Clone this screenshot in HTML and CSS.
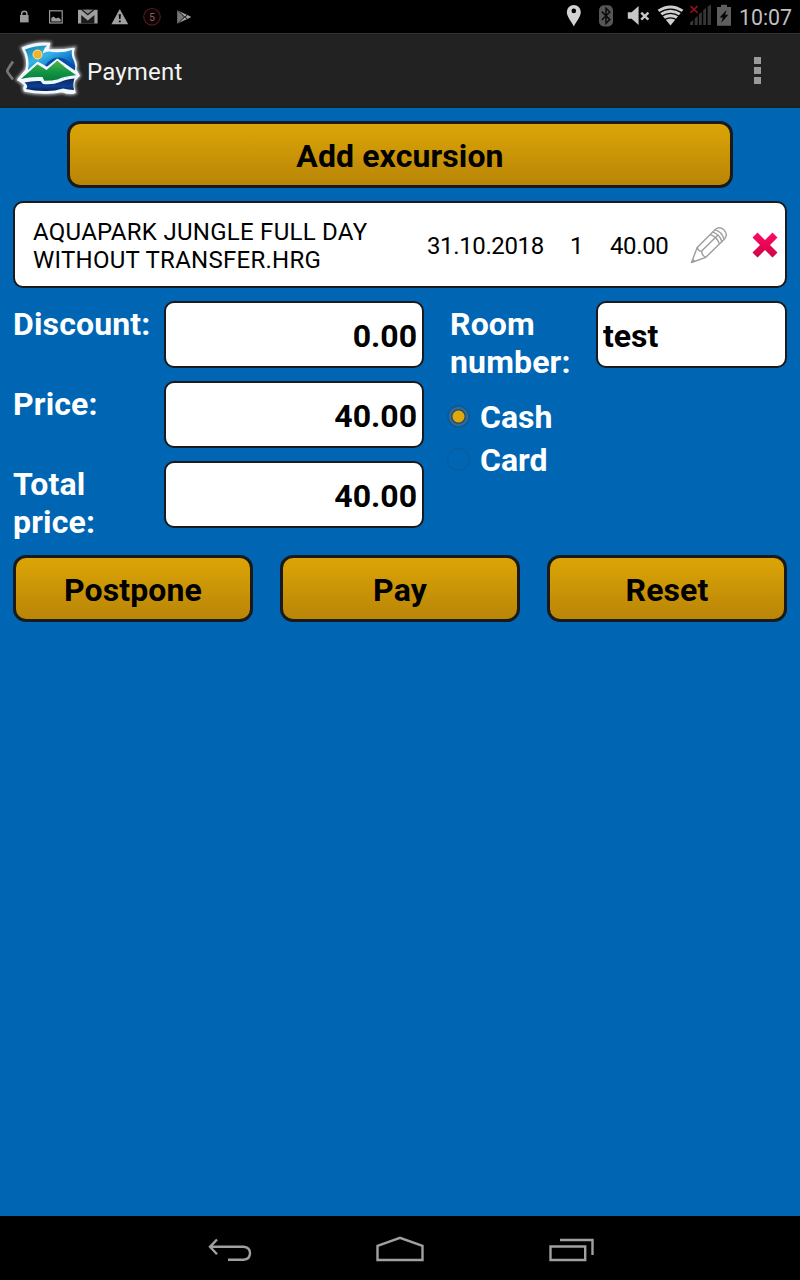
FILE: index.html
```html
<!DOCTYPE html>
<html lang="en">

<head>
    <meta charset="UTF-8">
    <meta name="viewport" content="width=device-width, initial-scale=1.0">
    <title>Payment</title>
    <link rel="stylesheet" href="styles.css">
</head>

<body>
    <div class="status-bar">
        <div class="status-group">
            <svg class="status-icon" viewBox="0 0 32 33">
                <rect x="12" y="15" width="8.6" height="7.4" fill="#9a9a9a" />
                <path d="M13.7 15.5v-1.7a2.6 2.6 0 0 1 5.2 0v1.7" fill="none" stroke="#9a9a9a" stroke-width="1.4" />
            </svg>
            <svg class="status-icon" viewBox="0 0 32 33">
                <rect x="9.6" y="10.8" width="12.6" height="12.2" fill="none" stroke="#9a9a9a" stroke-width="1.2" />
                <path d="M11.3 21.5v-3.6l2.2-1.4 2.5 2 2.3-1 2.4 1.700v2.300z" fill="#9a9a9a" />
            </svg>
            <svg class="status-icon" viewBox="0 0 32 33">
                <rect x="6" y="9.800" width="19.600" height="13.700" fill="#a0a0a0" />
                <path d="M9.200 23.500v-8.500l6.600 5.600 6.600-5.600v8.500z" fill="#1c1c1c" />
                <path d="M8.800 9.800l7 5.600 7-5.600z" fill="#1c1c1c" />
                <path d="M10.800 9.800l5 4 5-4z" fill="#8a8a8a" />
            </svg>
            <svg class="status-icon" viewBox="0 0 32 33">
                <path d="M15.8 9l8.4 15.2H7.4z" fill="#a0a0a0" />
                <path d="M14.7 14.2h2.2l-.4 4.8h-1.4zM14.9 20.4h1.8v1.8h-1.8z" fill="#000" />
            </svg>
            <svg class="status-icon" viewBox="0 0 32 33">
                <circle cx="16" cy="16.8" r="8.3" fill="#0c0404" stroke="#5a1a1c" stroke-width="1.1" />
                <text class="badge-count" x="16" y="20.6">5</text>
            </svg>
            <svg class="status-icon" viewBox="0 0 32 33">
                <path d="M9.2 10.2v13.6l7-6.8z" fill="#777" />
                <path d="M9.2 10.2l10 4.9-2.4 2zM9.2 23.8l10-4.9-2.4-2zM19.6 14.9l3.6 2.1-3.6 2.1-2-2.1z" fill="#a5a5a5" />
                <path d="M10 10.6l9.6 9M10 23.4l9.6-9" stroke="#111" stroke-width=".7" />
            </svg>
        </div>
        <div class="status-group">
            <svg class="status-icon" viewBox="0 0 32 33">
                <path fill-rule="evenodd" d="M15.8 26.4C13.8 22 8.8 17 8.8 12a7 7 0 0 1 14 0c0 5-5 10-7 14.4zM15.8 8.6a2.3 2.3 0 1 0 0 4.6 2.3 2.3 0 0 0 0-4.6z" fill="#d2d2d2" />
            </svg>
            <svg class="status-icon" viewBox="0 0 32 33">
                <rect x="9" y="5.2" width="14" height="21.2" rx="5" fill="#565656" />
                <path d="M11.8 11.6l8 8-3.8 3.8V8.2l3.8 3.8-8 8" fill="none" stroke="#0b0b0b" stroke-width="1.5" />
            </svg>
            <svg class="status-icon" viewBox="0 0 32 33">
                <path d="M5.800 12.300h3.800l7-6.300v19l-7-6.200H5.800z" fill="#c6c6c6" />
                <path d="M19.200 12.700l7.200 7M26.400 12.700l-7.200 7" stroke="#c6c6c6" stroke-width="2.400" />
            </svg>
            <svg class="status-icon" viewBox="0 0 32 33">
                <path d="M3.600 9.700q12.900-8.600 25.800 0L16.500 25.600z" fill="#cfcfcf" />
                <path d="M5 12.900q11.500-7.600 23 0M7.600 16.300q8.900-5.800 17.800 0M10.400 19.800q6.100-3.800 12.200 0" fill="none" stroke="#000" stroke-width="1.300" />
            </svg>
            <svg class="status-icon" viewBox="0 0 32 33">
                <path d="M4 25v-2.600l3.200-2.400v5zM8.700 25v-6.500l3-2.500v9zM13 25V14.200l2.800-2.400V25zM17.200 25V10.200L20 7.800V25zM21.600 25V6.800L25 4.500V25z" fill="#363636" />
                <path d="M4.500 6.200l7 6.400M11.500 6.200l-7 6.400" stroke="#8e0f1c" stroke-width="1.700" />
            </svg>
            <svg class="status-icon status-icon--battery" viewBox="0 0 20 33">
                <path d="M3 7h4V4.800h6V7h4v18.800H3z" fill="#5e5e5e" />
                <path d="M12.600 10l-7 7.400h3.200L7.200 22.800l7.200-8h-3.300z" fill="#050505" />
            </svg>
            <span class="clock">10:07</span>
        </div>
    </div>

    <header class="action-bar">
        <svg class="app-logo" viewBox="0 0 84 74">
            <defs>
                <linearGradient id="sky" x1="0" y1="0" x2="1" y2="1">
                    <stop offset="0" stop-color="#1b7fa8" />
                    <stop offset=".4" stop-color="#35b5e6" />
                    <stop offset=".75" stop-color="#0b6cc4" />
                    <stop offset="1" stop-color="#0a3a94" />
                </linearGradient>
                <linearGradient id="hill" x1="0" y1="0" x2="0" y2="1">
                    <stop offset="0" stop-color="#57b947" />
                    <stop offset=".55" stop-color="#129545" />
                    <stop offset="1" stop-color="#087a35" />
                </linearGradient>
                <linearGradient id="sea" x1="0" y1="0" x2="0" y2="1">
                    <stop offset="0" stop-color="#0c2560" />
                    <stop offset=".6" stop-color="#0d3f91" />
                    <stop offset="1" stop-color="#0a1f55" />
                </linearGradient>
                <filter id="glow" x="-20%" y="-20%" width="140%" height="140%">
                    <feGaussianBlur stdDeviation="1.500" />
                </filter>
                <path id="edge" d="M22.500 15q12-5.500 27-4.500l-1.500 6.500q14 .5 26-1.500-2 6 1 12 2 4 .5 9l3.500 6-4.500 5q-2 5 .5 12-5 2-13-1-6 1-14 1.500-12 .5-23-2-2-2 0-6l-7-5.500 8-9.500q3-10-3.500-22z" />
            </defs>
            <path d="M13 28.500q-5.800 8.500-5.800 9.500t5.800 8.500" fill="none" stroke="#757575" stroke-width="2.800" />
            <use href="#edge" fill="#fff" stroke="#fff" stroke-width="4" filter="url(#glow)" opacity=".65" />
            <use href="#edge" fill="#eff7ff" stroke="#eff7ff" stroke-width="1.500" stroke-linejoin="round" />
            <path d="M25 16.500q10-4 22-4-4 4-4 8 4-3 10-1.500 10 1 19-2-1 6 2 11 2 5 1 9L57.500 25.500l-10.500 8-9.500-5L28 37q2-12-3-20.500z" fill="url(#sky)" />
            <path d="M57 25l-10 8.500-2-1q6-8 13-8 8 0 16 9l1 4z" fill="#0b4aa6" />
            <circle cx="37.500" cy="21.500" r="4.500" fill="#f6b12b" stroke="#ffe59a" stroke-width="1" />
            <path d="M19 46.800Q29 38 37.300 30.500l9.200 5.800 10.800-9.500Q66 35 78 42.700q-14 1-20.500 4.500-6 1.500-13.500 1.300l-2-3.800q-10-.5-23 2.100z" fill="url(#hill)" stroke="#eff7ff" stroke-width="1.300" />
            <path d="M24.500 49.500q8-2 16-1.500l2.500 3q10 1 17-2 6-3 14.500-3.500-2 5-.5 11.500-6-.5-11-1.500-8 2.500-16 2.500-11 .5-21-2 3-3-1.500-6.500z" fill="url(#sea)" />
        </svg>
        <span class="title">Payment</span>
        <div class="overflow">
            <span class="overflow-dot"></span>
            <span class="overflow-dot"></span>
            <span class="overflow-dot"></span>
        </div>
    </header>

    <main class="content">
        <button type="button" class="btn btn-add">Add excursion</button>

        <div class="excursion">
            <span class="excursion-name">AQUAPARK JUNGLE FULL DAY WITHOUT TRANSFER.HRG</span>
            <span class="excursion-date">31.10.2018</span>
            <span class="excursion-count">1</span>
            <span class="excursion-price">40.00</span>
            <svg class="icon-edit" viewBox="0 0 38 38">
                <path d="M1.500 36.500l5.700-15L25.500 3.300q4.500-3.500 8.700.8 4 4.500.3 9L15.800 31.300z" />
                <path d="M7.200 21.500q1.400 4.300 4.400 3.500.3 5 4.200 6.300M11.600 25L27.500 9.500M20.300 8.600q6.500 2.200 9 9M22.800 6.200q6.500 2 9 9M25.300 3.800q6.500 2 8.700 9M2.700 33.500l1.900 1.700" />
            </svg>
            <svg class="icon-delete" viewBox="0 0 26 26">
                <defs>
                    <linearGradient id="cross" x1="0" y1="0" x2="0" y2="1">
                        <stop offset="0" stop-color="#ff0a66" />
                        <stop offset="1" stop-color="#cf0345" />
                    </linearGradient>
                </defs>
                <path d="M5.500.500l7.500 7.500 7.500-7.500 5 5-7.500 7.500 7.500 7.500-5 5-7.500-7.500-7.500 7.500-5-5 7.500-7.500-7.500-7.500z" fill="url(#cross)" />
            </svg>
        </div>

        <form class="payment-form">
            <div class="amounts">
                <label class="label" for="discount">Discount:</label>
                <input type="text" id="discount" class="input-field amount" value="0.00">
                <label class="label" for="price">Price:</label>
                <input type="text" id="price" class="input-field amount" value="40.00">
                <label class="label" for="total">Total price:</label>
                <input type="text" id="total" class="input-field amount" value="40.00">
            </div>
            <div class="details">
                <div class="room">
                    <label class="label" for="room">Room number:</label>
                    <input type="text" id="room" class="input-field" value="test">
                </div>
                <label class="radio">
                    <input type="radio" name="method" class="radio-input" checked>
                    Cash
                </label>
                <label class="radio">
                    <input type="radio" name="method" class="radio-input">
                    Card
                </label>
            </div>
        </form>

        <div class="actions">
            <button type="button" class="btn">Postpone</button>
            <button type="button" class="btn">Pay</button>
            <button type="button" class="btn">Reset</button>
        </div>
    </main>

    <nav class="nav-bar">
        <svg class="nav-icon" viewBox="0 0 48 32">
            <path d="M12 7.500L5 14.800l7 7.500M5.500 14.800h33q6.500.4 6.500 6.500t-6.500 6.500H23" />
        </svg>
        <svg class="nav-icon" viewBox="0 0 48 32">
            <path d="M1.500 13.800L24 5.800l22.500 8v14.200h-45z" />
        </svg>
        <svg class="nav-icon" viewBox="0 0 48 32">
            <path d="M3.500 14.500h34.700v13.500H3.500zM13 8h32.500v15" />
        </svg>
    </nav>
</body>

</html>
```
FILE: styles.css
```css
* {
    box-sizing: border-box;
}

body {
    font-family: Roboto, sans-serif;
    background-color: #0066b3;
    display: flex;
    flex-direction: column;
    height: 100vh;
    margin: 0;
}

.status-bar {
    display: flex;
    justify-content: space-between;
    height: 33px;
    padding: 0 8px;
    background-color: black;
}

.status-group {
    display: flex;
    align-items: center;
}

.status-icon {
    width: 32px;
    height: 33px;
}

.status-icon--battery {
    width: 20px;
    margin-left: -4px;
}

.badge-count {
    font-size: 10.5px;
    text-anchor: middle;
    fill: #8e5c5c;
}

.clock {
    width: 53px;
    margin-left: 5px;
    padding-top: 2px;
    font-size: 21.3px;
    white-space: nowrap;
    color: #c0c0c0;
}

.action-bar {
    display: flex;
    align-items: center;
    height: 75px;
    padding-right: 39px;
    background-color: #222;
    border-top: 1px solid #333;
    border-bottom: 2px solid #1b2025;
}

.app-logo {
    width: 84px;
    height: 74px;
}

.title {
    flex: 1;
    margin-left: 3px;
    padding-top: 3px;
    font-size: 24px;
    letter-spacing: 0.2px;
    color: #f3f3f3;
}

.overflow {
    display: flex;
    flex-direction: column;
    gap: 3px;
}

.overflow-dot {
    width: 7px;
    height: 7px;
    background-color: #9a9a9a;
}

.content {
    flex: 1;
    display: flex;
    flex-direction: column;
    padding: 13px 13px 0;
}

.btn {
    height: 67px;
    padding: 2px 0 0;
    background: linear-gradient(#dba506, #b98507);
    border: 3px solid #1a1a1c;
    border-radius: 13px;
    font-family: inherit;
    font-size: 32px;
    font-weight: bold;
    letter-spacing: 0.1px;
    color: black;
}

.btn-add {
    width: 666px;
    align-self: center;
}

.excursion {
    display: flex;
    align-items: center;
    height: 87px;
    margin-top: 13px;
    padding-left: 18px;
    background-color: white;
    border: 2px solid #1a1a1c;
    border-radius: 10px;
    font-size: 24px;
    line-height: 28px;
    letter-spacing: -0.38px;
    color: black;
}

.excursion span {
    padding-top: 2px;
}

.excursion-name {
    width: 394px;
    padding-right: 40px;
    letter-spacing: 0.27px;
}

.excursion-date {
    width: 143px;
}

.excursion-count {
    width: 40px;
}

.excursion-price {
    width: 80px;
}

.icon-edit {
    width: 38px;
    height: 38px;
    fill: none;
    stroke: #9c9c9c;
    stroke-width: 1.4;
    stroke-linejoin: round;
}

.icon-delete {
    width: 26px;
    height: 26px;
    margin-left: 24px;
}

.payment-form {
    display: flex;
    gap: 26px;
    margin-top: 13px;
}

.amounts {
    display: grid;
    grid-template-columns: 151px 260px;
    grid-template-rows: 67px 67px 81px;
    row-gap: 13px;
}

.label {
    padding-top: 4px;
    font-size: 32px;
    font-weight: bold;
    line-height: 38px;
    letter-spacing: 0.15px;
    color: white;
}

.input-field {
    width: 100%;
    height: 67px;
    padding: 2px 5px 0;
    background-color: white;
    border: 2px solid #1a1a1c;
    border-radius: 10px;
    font-family: inherit;
    font-size: 32px;
    font-weight: bold;
    color: black;
}

.input-field.amount {
    text-align: right;
}

.details {
    flex: 1;
}

.room {
    display: grid;
    grid-template-columns: 146px 191px;
    margin-bottom: 14px;
}

.radio {
    display: flex;
    align-items: center;
    height: 43px;
    font-size: 32px;
    font-weight: bold;
    color: white;
}

.radio-input {
    appearance: none;
    width: 23px;
    height: 23px;
    margin: 0 10px 0 -3px;
    border: 1px solid #12568f;
    border-radius: 50%;
}

.radio-input:checked {
    background: radial-gradient(circle, #e0a80c 5.5px, #23435a 6.5px, #2a6e9c 8px, #2f6d96 9px, #145a94 10px);
}

.actions {
    display: grid;
    grid-template-columns: repeat(3, 1fr);
    gap: 27px;
    margin-top: 13px;
}

.nav-bar {
    display: flex;
    justify-content: center;
    align-items: center;
    gap: 123px;
    height: 64px;
    background-color: black;
}

.nav-icon {
    width: 48px;
    height: 32px;
    fill: none;
    stroke: #a0a0a0;
    stroke-width: 2.4;
}
```
